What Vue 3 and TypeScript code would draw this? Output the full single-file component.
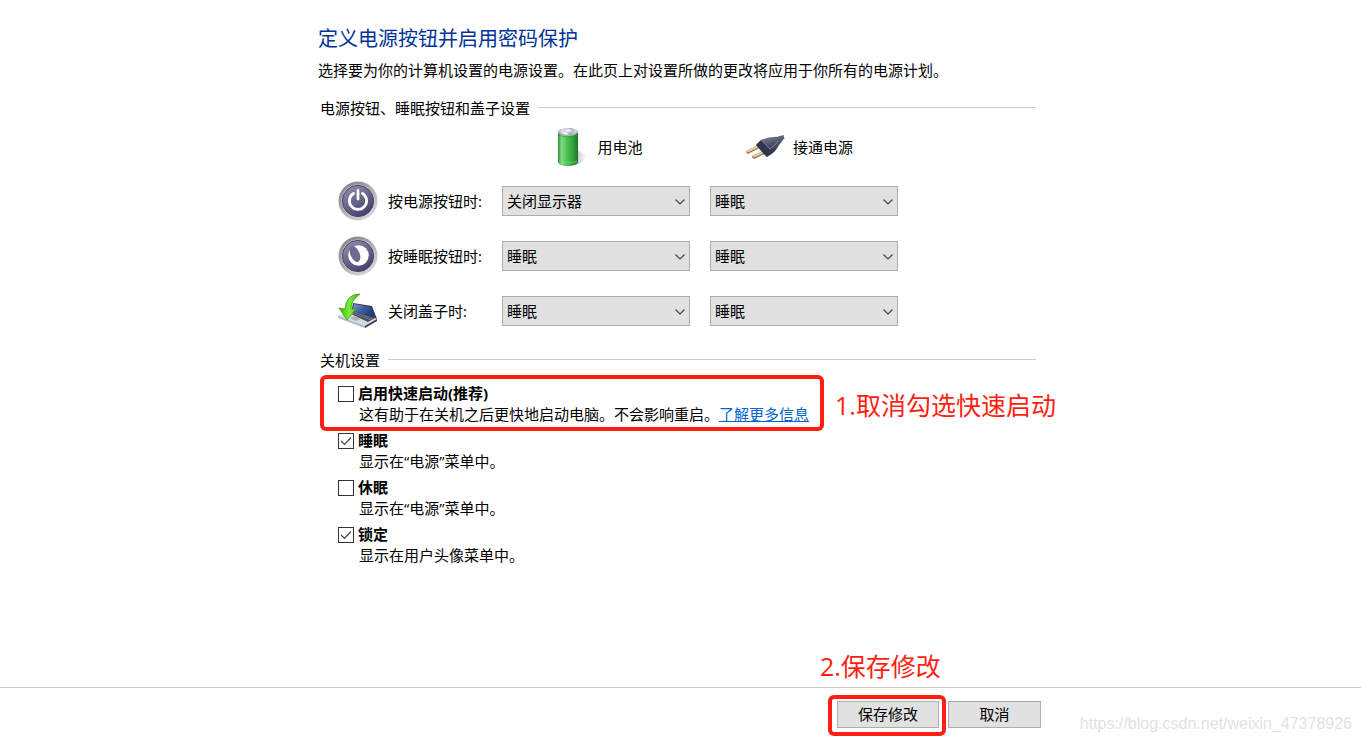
<script setup lang="ts">
import { reactive } from 'vue'

interface ActionRow {
  id: string
  label: string
  icon: 'power' | 'sleep' | 'lid'
  battery: string
  plugged: string
}

interface ShutdownOption {
  id: string
  title: string
  text: string
  checked: boolean
  link?: string
  note?: string
}

const choices = ['不采取任何操作', '睡眠', '休眠', '关机', '关闭显示器']

const rows = reactive<ActionRow[]>([
  { id: 'power', label: '按电源按钮时:', icon: 'power', battery: '关闭显示器', plugged: '睡眠' },
  { id: 'sleep', label: '按睡眠按钮时:', icon: 'sleep', battery: '睡眠', plugged: '睡眠' },
  { id: 'lid', label: '关闭盖子时:', icon: 'lid', battery: '睡眠', plugged: '睡眠' },
])

const options = reactive<ShutdownOption[]>([
  {
    id: 'fast',
    title: '启用快速启动(推荐)',
    text: '这有助于在关机之后更快地启动电脑。不会影响重启。',
    checked: false,
    link: '了解更多信息',
    note: '1.取消勾选快速启动',
  },
  { id: 'opt-sleep', title: '睡眠', text: '显示在“电源”菜单中。', checked: true },
  { id: 'opt-hibernate', title: '休眠', text: '显示在“电源”菜单中。', checked: false },
  { id: 'opt-lock', title: '锁定', text: '显示在用户头像菜单中。', checked: true },
])
</script>

<template>
  <div class="page">
    <main class="content">
      <h1>定义电源按钮并启用密码保护</h1>
      <p class="intro">选择要为你的计算机设置的电源设置。在此页上对设置所做的更改将应用于你所有的电源计划。</p>

      <section>
        <h2><span>电源按钮、睡眠按钮和盖子设置</span></h2>
        <div class="grid">
          <div class="source battery">
            <svg width="40" height="40" viewBox="0 0 40 40" aria-hidden="true">
              <defs>
                <linearGradient id="bat" x1="0" x2="1">
                  <stop offset="0" stop-color="#2c8f35" />
                  <stop offset="0.18" stop-color="#7fdc80" />
                  <stop offset="0.4" stop-color="#55c558" />
                  <stop offset="0.7" stop-color="#36a83f" />
                  <stop offset="1" stop-color="#1c7426" />
                </linearGradient>
                <linearGradient id="batTop" x1="0" x2="1">
                  <stop offset="0" stop-color="#b9bfc6" />
                  <stop offset="0.4" stop-color="#ffffff" />
                  <stop offset="0.6" stop-color="#a9a7c2" />
                  <stop offset="1" stop-color="#d7dbe2" />
                </linearGradient>
                <linearGradient id="batShadow" x1="0" x2="1">
                  <stop offset="0" stop-color="#999" stop-opacity="0.7" />
                  <stop offset="1" stop-color="#ccc" stop-opacity="0" />
                </linearGradient>
              </defs>
              <path d="M28 23 L38 28 Q36 35 27 38 Z" fill="url(#batShadow)" />
              <path d="M9 5 V35 Q10 39 19 39 Q28 39 29 35 V5 Z" fill="url(#bat)" />
              <path d="M9 8 Q19 12 29 8" fill="none" stroke="#2b8a34" stroke-opacity="0.5" />
              <path d="M10 34 Q19 38 28 34" fill="none" stroke="#8be58b" stroke-opacity="0.6" />
              <ellipse cx="19" cy="5" rx="10" ry="4" fill="#a5b5a8" />
              <ellipse cx="19" cy="4.5" rx="9" ry="3.2" fill="url(#batTop)" />
              <path d="M15 3 Q19 0 23 3 L22 5 Q19 6 16 5 Z" fill="#eeeefa" stroke="#aaa8c4" stroke-width="0.6" />
            </svg>
            <span>用电池</span>
          </div>
          <div class="source plugged">
            <svg width="40" height="40" viewBox="0 0 40 40" aria-hidden="true">
              <defs>
                <linearGradient id="plug" x1="0.3" y1="0" x2="0.7" y2="1">
                  <stop offset="0" stop-color="#7b8298" />
                  <stop offset="0.45" stop-color="#4a5068" />
                  <stop offset="1" stop-color="#23263a" />
                </linearGradient>
              </defs>
              <path d="M30 13 Q35 11 39 10" stroke="#5c6060" stroke-width="4" fill="none" />
              <path d="M3 25 L15 19" stroke="#9c7a50" stroke-width="3.6" stroke-linecap="round" />
              <path d="M3 24.4 L15 18.4" stroke="#efd0a0" stroke-width="1.8" stroke-linecap="round" />
              <path d="M9 30 L22 24" stroke="#9c7a50" stroke-width="3.6" stroke-linecap="round" />
              <path d="M9 29.4 L22 23.4" stroke="#efd0a0" stroke-width="1.8" stroke-linecap="round" />
              <path d="M11 18 L16 13 Q25 9 35 10 L38 9 V13 L34 18 Q31 25 22 30 L18 26 Z" fill="url(#plug)" />
              <path d="M11 18 L16 13 L25 22 L22 30 Z" fill="#30354c" />
              <path d="M16 13 L25 22 Q30 19 33 14" fill="none" stroke="#8990a6" stroke-width="0.8" />
            </svg>
            <span>接通电源</span>
          </div>

          <template v-for="row in rows" :key="row.id">
            <div class="label">
              <svg v-if="row.icon !== 'lid'" width="40" height="40" viewBox="0 0 40 40" aria-hidden="true">
                <defs>
                  <linearGradient :id="row.id + '-rim'" x1="0" y1="0" x2="0.8" y2="1">
                    <stop offset="0" stop-color="#77797c" />
                    <stop offset="0.5" stop-color="#a8aaad" />
                    <stop offset="1" stop-color="#dcdcde" />
                  </linearGradient>
                  <linearGradient :id="row.id + '-face'" x1="0.2" y1="0" x2="0.8" y2="1">
                    <stop offset="0" stop-color="#8f8eaa" />
                    <stop offset="0.5" stop-color="#66658a" />
                    <stop offset="1" stop-color="#3d3b66" />
                  </linearGradient>
                </defs>
                <circle cx="20" cy="20" r="19.5" :fill="`url(#${row.id}-rim)`" />
                <circle cx="20" cy="20" r="16.5" fill="#c7c7d8" />
                <circle cx="20" cy="20" r="15.6" :fill="`url(#${row.id}-face)`" stroke="#484765" stroke-width="1" />
                <g v-if="row.icon === 'power'" fill="none" stroke="#fff" stroke-width="2.8" stroke-linecap="round">
                  <path d="M15.5 12.5 A8.6 8.6 0 1 0 24.5 12.5" />
                  <path d="M20 9.5 V18" />
                </g>
                <g v-else>
                  <circle cx="20.5" cy="19.5" r="10.3" fill="#fff" />
                  <ellipse cx="17" cy="18" rx="4.6" ry="8.4" transform="rotate(-24 17 18)" fill="#6c6b8e" />
                </g>
              </svg>
              <svg v-else width="40" height="40" viewBox="0 0 40 40" aria-hidden="true">
                <defs>
                  <linearGradient id="screen" x1="0" y1="0" x2="1" y2="0.6">
                    <stop offset="0" stop-color="#8498cc" />
                    <stop offset="0.5" stop-color="#435da4" />
                    <stop offset="1" stop-color="#233a7e" />
                  </linearGradient>
                  <linearGradient id="arrow" x1="0" y1="0" x2="1" y2="0">
                    <stop offset="0" stop-color="#3fae13" />
                    <stop offset="0.5" stop-color="#7cec35" />
                    <stop offset="1" stop-color="#40ad20" />
                  </linearGradient>
                </defs>
                <path d="M15 12 L34 15 L39 28 L13 23 Z" fill="#353d4e" />
                <path d="M16 13 L33 16 L36 26 L14 21 Z" fill="url(#screen)" />
                <path d="M0 25 L13 20 L39 28 L27 35 Z" fill="#d5dae2" />
                <path d="M11 22 L16 20 L37 27 L30 31 Z" fill="#424a5b" />
                <path d="M14 22 L33 29 M16 21 L35 28" stroke="#919aab" stroke-width="0.6" />
                <path d="M0 25 L27 35 V37 L0 27 Z" fill="#aeb5c0" />
                <path d="M27 35 L39 28 V30 L27 37 Z" fill="#30384a" />
                <path d="M12 27 L17 25 L23 28 L18 30 Z" fill="#a9b0bc" />
                <path d="M22 3 Q8 3 7 18 L1 17 L9 29 L18 18 L13 18 Q13 9 22 3 Z" fill="url(#arrow)" stroke="#38a319" stroke-width="0.8" />
              </svg>
              <span>{{ row.label }}</span>
            </div>
            <div class="combo">
              <select v-model="row.battery" :aria-label="row.label + ' 用电池'">
                <option v-for="c in choices" :key="c">{{ c }}</option>
              </select>
              <svg width="10" height="6" viewBox="0 0 10 6" aria-hidden="true"><path d="M0.5 0.5 L5 5 L9.5 0.5" /></svg>
            </div>
            <div class="combo">
              <select v-model="row.plugged" :aria-label="row.label + ' 接通电源'">
                <option v-for="c in choices" :key="c">{{ c }}</option>
              </select>
              <svg width="10" height="6" viewBox="0 0 10 6" aria-hidden="true"><path d="M0.5 0.5 L5 5 L9.5 0.5" /></svg>
            </div>
          </template>
        </div>
      </section>

      <section>
        <h2><span>关机设置</span></h2>
        <ul class="options">
          <li v-for="o in options" :key="o.id">
            <div class="tick">
              <input :id="o.id" v-model="o.checked" type="checkbox" />
              <svg v-if="o.checked" width="16" height="16" viewBox="0 0 16 16" aria-hidden="true"><path d="M3 8 L6.5 11.5 L13 4.5" /></svg>
            </div>
            <div>
              <label :for="o.id">{{ o.title }}</label>
              <p>{{ o.text }}<a v-if="o.link" href="#">{{ o.link }}</a></p>
            </div>
            <template v-if="o.note">
              <span class="frame option-frame"></span>
              <span class="note option-note">{{ o.note }}</span>
            </template>
          </li>
        </ul>
      </section>
    </main>

    <footer>
      <div class="actions">
        <div class="save">
          <button type="button" class="primary">保存修改</button>
          <span class="frame save-frame"></span>
          <span class="note save-note">2.保存修改</span>
        </div>
        <button type="button">取消</button>
      </div>
      <span class="watermark">https://blog.csdn.net/weixin_47378926</span>
    </footer>
  </div>
</template>

<style>
body {
  margin: 0;
  background: #fff;
}
</style>

<style scoped>
.page {
  display: flex;
  flex-direction: column;
  min-height: 100vh;
  box-sizing: border-box;
  color: #000;
  font: 15px/20px "Open Sans", "Noto Sans CJK SC", sans-serif;
}
.content,
.actions {
  width: 100%;
  max-width: 725px;
  margin: 0 auto;
  box-sizing: border-box;
}
.content {
  flex: 1;
  padding: 24px 7px 24px 0;
}
h1,
h2,
p,
ul {
  margin: 0;
  padding: 0;
  font-weight: 400;
}
h1 {
  color: #003399;
  font-size: 20px;
  line-height: 30px;
}
.intro {
  margin-top: 6px;
}
h2 {
  display: flex;
  gap: 8px;
  padding-left: 2px;
  margin-top: 18px;
  font-size: 15px;
  line-height: 20px;
}
h2::after {
  content: "";
  flex: 1;
  height: 1px;
  margin-top: 9px;
  background: #ccc;
}
.grid {
  display: grid;
  grid-template-columns: 144px 188px 188px;
  column-gap: 20px;
  row-gap: 15px;
  padding: 9px 0 1px 20px;
}
.source,
.label {
  display: flex;
  align-items: center;
}
.source {
  justify-content: center;
  gap: 8px;
  height: 39px;
}
.battery {
  grid-column: 2;
}
.plugged {
  padding-right: 10px;
}
.label {
  gap: 10px;
  white-space: nowrap;
}
.label svg,
.source svg {
  flex: none;
}
.combo {
  position: relative;
  align-self: center;
}
.combo svg {
  position: absolute;
  right: 5px;
  top: 13px;
  pointer-events: none;
}
.combo path,
.tick path {
  fill: none;
  stroke: #444;
  stroke-width: 1.2;
}
select {
  display: block;
  width: 100%;
  height: 30px;
  padding: 0 20px 0 4px;
  border: 1px solid #adadad;
  border-radius: 0;
  background: #e1e1e1;
  color: #000;
  font: inherit;
  appearance: none;
}
.options {
  display: flex;
  flex-direction: column;
  align-items: flex-start;
  gap: 5px;
  padding: 13px 0 0 20px;
  list-style: none;
}
li {
  position: relative;
  display: flex;
  gap: 4px;
}
.tick {
  position: relative;
  width: 16px;
  height: 16px;
  margin-top: 3px;
}
.tick input {
  display: block;
  width: 16px;
  height: 16px;
  margin: 0;
  border: 1px solid #333;
  background: #fff;
  appearance: none;
}
.tick svg {
  position: absolute;
  inset: 0;
  pointer-events: none;
}
label {
  display: block;
  font-weight: 700;
}
li p {
  padding-left: 1px;
  line-height: 22px;
}
a {
  color: #0066cc;
}
.frame {
  position: absolute;
  border: 4px solid #ff1f12;
  border-radius: 6px;
  pointer-events: none;
}
.option-frame {
  inset: -8px -15px -6px -18px;
}
.note {
  position: absolute;
  color: #ff1f12;
  font-size: 25px;
  line-height: 32px;
  white-space: nowrap;
}
.option-note {
  left: 100%;
  top: 6px;
  margin-left: 26px;
}
footer {
  position: relative;
  border-top: 1px solid #ccc;
  padding: 13px 0 14px;
}
.actions {
  display: flex;
  justify-content: flex-end;
  gap: 9px;
  padding-right: 2px;
}
.save {
  position: relative;
}
button {
  display: block;
  width: 93px;
  height: 27px;
  padding: 0 0 2px;
  border: 1px solid #adadad;
  background: #e1e1e1;
  color: #000;
  font: inherit;
}
.primary {
  width: 102px;
}
.save-frame {
  inset: -6px -7px -8px -9px;
}
.save-note {
  left: -17px;
  bottom: 46px;
}
.watermark {
  position: absolute;
  right: 9px;
  bottom: 8px;
  color: #e2e2e2;
  font: 16px/20px "Liberation Sans", Arial, sans-serif;
}
</style>
